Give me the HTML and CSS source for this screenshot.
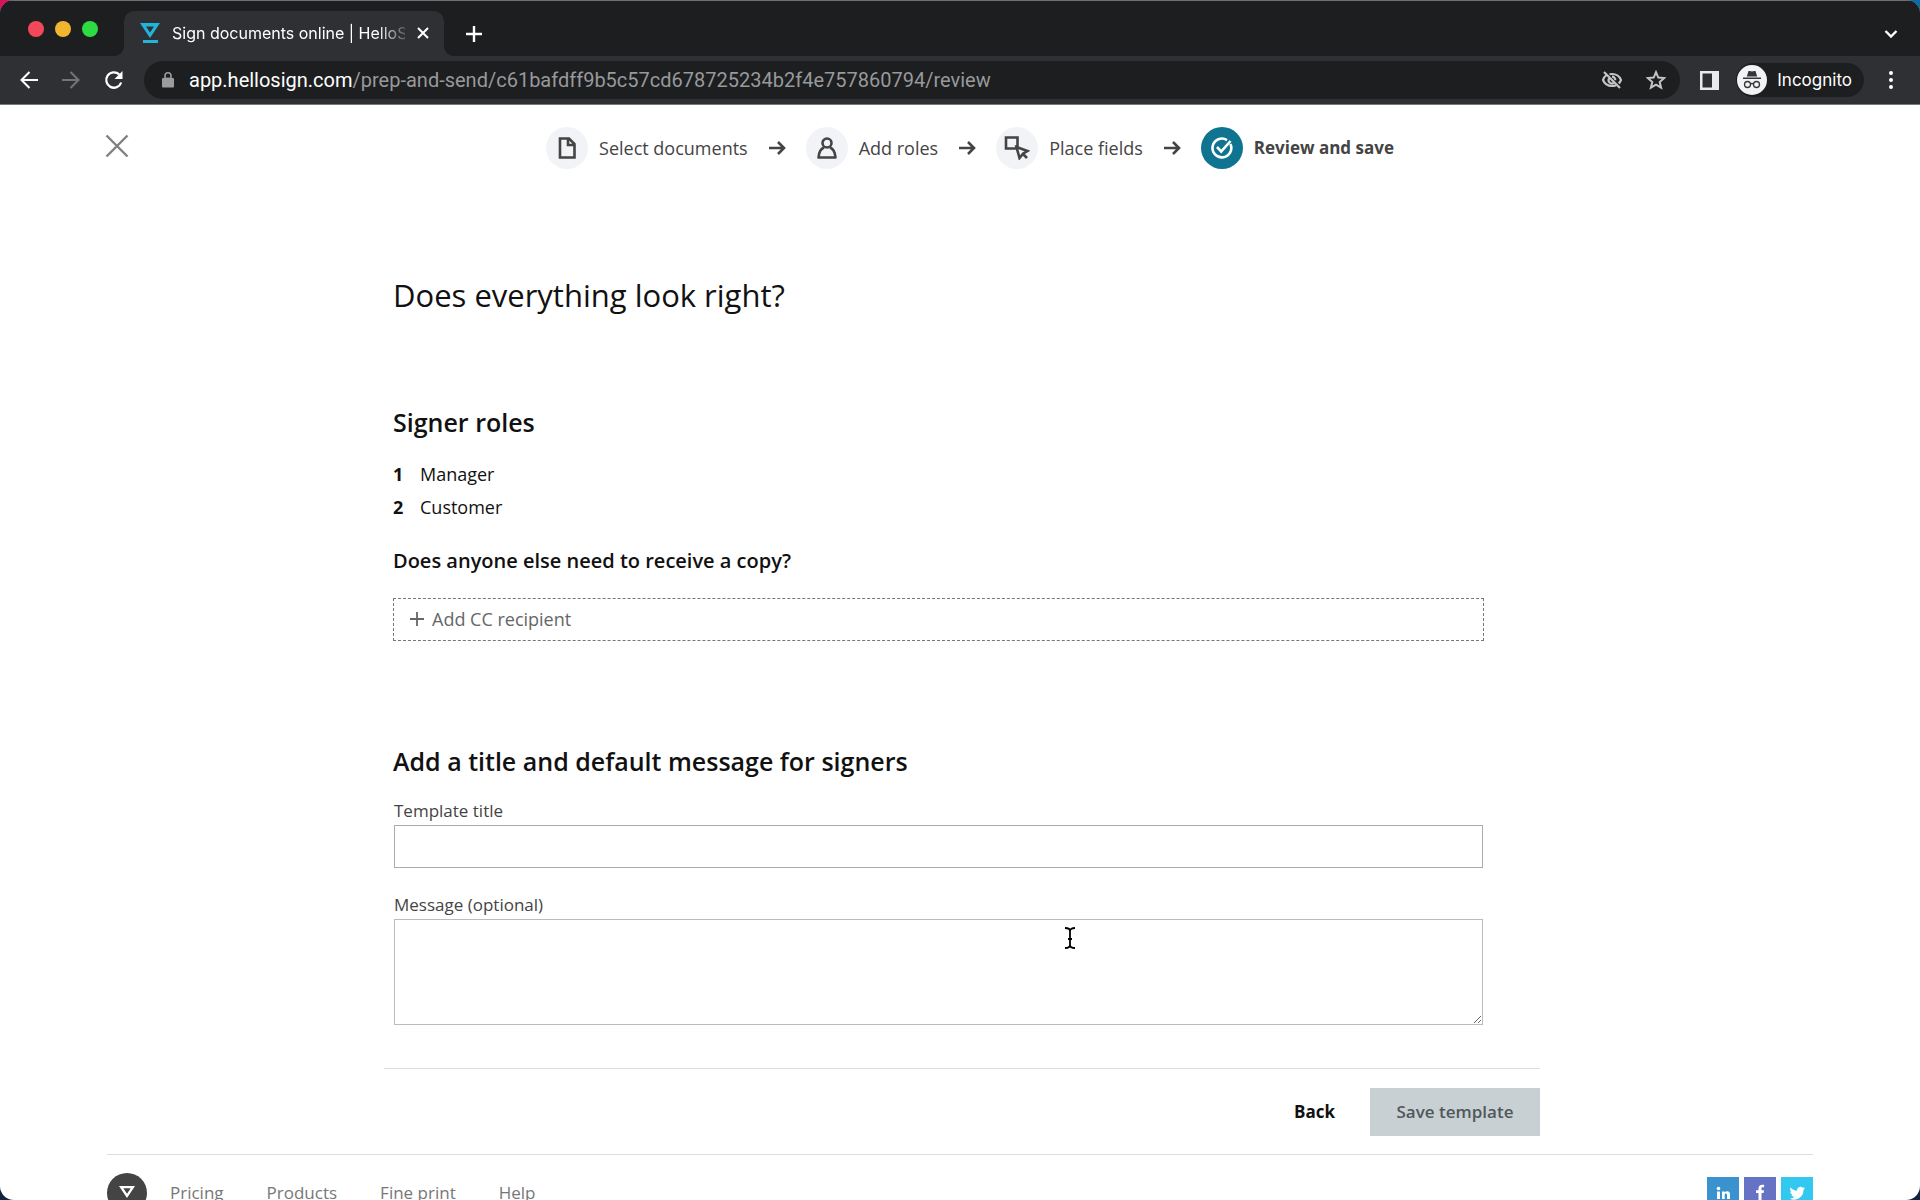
FILE: index.html
```html
<!DOCTYPE html>
<html lang="en">
<head>
<meta charset="utf-8">
<title>Sign documents online | HelloSign</title>
<link rel="stylesheet" href="styles.css">
</head>
<body>
<div class="window">
  <header class="chrome">
    <div class="tabstrip">
      <div class="lights"><span class="light red"></span><span class="light yellow"></span><span class="light green"></span></div>
      <div class="tab">
        <svg class="favicon" width="20" height="20" viewBox="0 0 20 20"><path fill="#22b5dc" fill-rule="evenodd" d="M0 0h20L10 15zM6 3.500l4 6 4-6zM3 17h15v3H3z"/></svg>
        <span class="tab-title">Sign documents online | HelloSign</span>
        <button class="plain" aria-label="Close tab"><svg width="12" height="12" viewBox="0 0 12 12" fill="none" stroke="#fff" stroke-width="2"><path d="M1 1l10 10M11 1L1 11"/></svg></button>
      </div>
      <button class="plain new-tab" aria-label="New tab"><svg width="16" height="16" viewBox="0 0 16 16" fill="none" stroke="#fff" stroke-width="2.400"><path d="M8 0v16M0 8h16"/></svg></button>
      <button class="plain tab-search" aria-label="Search tabs"><svg width="14" height="10" viewBox="0 0 14 10" fill="none" stroke="#fff" stroke-width="2.400"><path d="M1.500 2l5.500 5.500L12.500 2"/></svg></button>
    </div>
    <div class="toolbar">
      <div class="nav">
        <button class="plain" aria-label="Back"><svg width="18" height="18" viewBox="0 0 18 18" fill="none" stroke="#fff" stroke-width="2"><path d="M18 9H2M9.500 1L1.500 9l8 8"/></svg></button>
        <button class="plain" aria-label="Forward"><svg width="18" height="18" viewBox="0 0 18 18" fill="none" stroke="#737477" stroke-width="2"><path d="M0 9h16M8.500 1l8 8-8 8"/></svg></button>
        <button class="plain" aria-label="Reload"><svg width="20" height="20" viewBox="0 0 20 20"><path fill="none" stroke="#fff" stroke-width="2.300" d="M17.200 12.500A7.700 7.700 0 1 1 15.200 4.400"/><path fill="#fff" d="M18.500 1v8h-8z"/></svg></button>
      </div>
      <div class="omnibox">
        <svg width="12" height="16" viewBox="0 0 12 16"><rect y="6" width="12" height="9.500" rx="1" fill="#9b9c9e"/><path d="M3 6V3.800a3 3 0 0 1 6 0V6" fill="none" stroke="#9b9c9e" stroke-width="1.600"/><path fill="#9b9c9e" d="M3 5h6v2H3z" opacity=".4"/></svg>
        <span class="url"><span class="host">app.hellosign.com</span>/prep-and-send/c61bafdff9b5c57cd678725234b2f4e757860794/review</span>
        <svg width="20" height="20" viewBox="0 0 20 20" fill="none" stroke="#c4c5c7" stroke-width="2.200"><path d="M4.500 5C2.800 6.300 1.600 8 1 10c1.500 3.800 5 6 9 6 1.500 0 2.800-.3 4-.8M7.500 4.200C8.300 4 9.100 4 10 4c4 0 7.500 2.200 9 6-.5 1.300-1.300 2.500-2.300 3.400"/><path d="M7 8.500A3.300 3.300 0 0 0 11.500 13M10 6.700a3.300 3.300 0 0 1 3.300 3.500M2 2l16 16"/></svg>
        <svg width="20" height="20" viewBox="0 0 20 20" fill="none" stroke="#c4c5c7" stroke-width="2"><path d="M10 2.200l2.300 5.400 5.900.5-4.500 3.900 1.400 5.700-5.100-3-5.100 3 1.400-5.700L1.800 8.100l5.900-.5z"/></svg>
      </div>
      <button class="plain" aria-label="Side panel"><svg width="20" height="20" viewBox="0 0 20 20"><path fill="#e8eaed" fill-rule="evenodd" d="M0 1h19v19H0zM2.500 3.500v14H12v-14z"/></svg></button>
      <button class="incognito">
        <svg width="30" height="30" viewBox="0 0 30 30"><circle cx="15" cy="15" r="15" fill="#f1f3f4"/><path fill="#35363a" d="M11.500 6h1.500l2 .6L17 6h1.500l1.700 5.500H9.800zM6 12.500h18V14H6z"/><g fill="none" stroke="#35363a" stroke-width="1.300"><circle cx="10.500" cy="19.500" r="3"/><circle cx="19.500" cy="19.500" r="3"/><path d="M13.500 19q1.500-1 3 0"/></g></svg>
        Incognito
      </button>
      <button class="plain menu" aria-label="Menu"><svg width="4" height="18" viewBox="0 0 4 18" fill="#fff"><circle cx="2" cy="2" r="2"/><circle cx="2" cy="9" r="2"/><circle cx="2" cy="16" r="2"/></svg></button>
    </div>
  </header>

  <div class="page">
    <div class="topbar">
      <button class="plain close" aria-label="Close"><svg width="24" height="24" viewBox="0 0 24 24" fill="none" stroke="#808080" stroke-width="2.400"><path d="M1.500 1.500l21 21M22.500 1.500l-21 21"/></svg></button>
      <ol class="steps">
        <li class="step"><span class="step-icon"><svg width="18" height="22" viewBox="0 0 18 22" fill="none" stroke="#444" stroke-width="2.600"><path d="M2 1.500h9l5.500 5.500v13.500H2zM10 1.500V8h6.500"/></svg></span>Select documents</li>
        <li class="arrow"><svg width="18" height="14" viewBox="0 0 18 14" fill="none" stroke="#444" stroke-width="2.600"><path d="M1 7h14M10 1l6 6-6 6"/></svg></li>
        <li class="step"><span class="step-icon"><svg width="20" height="22" viewBox="0 0 20 22" fill="none" stroke="#444" stroke-width="2.600"><circle cx="10" cy="6" r="4.500"/><path d="M7 10.500c-3 1.200-5 3.500-5.500 10h17c-.5-6.500-2.500-8.800-5.500-10" stroke-linejoin="round"/></svg></span>Add roles</li>
        <li class="arrow"><svg width="18" height="14" viewBox="0 0 18 14" fill="none" stroke="#444" stroke-width="2.600"><path d="M1 7h14M10 1l6 6-6 6"/></svg></li>
        <li class="step"><span class="step-icon"><svg width="26" height="24" viewBox="0 0 26 24" fill="none" stroke="#444" stroke-width="2.600"><path d="M12 12.500H2v-11h11.500v9M12.500 11l11 4-4.500 2.700L15.500 22zM18 17l5 5"/></svg></span>Place fields</li>
        <li class="arrow"><svg width="18" height="14" viewBox="0 0 18 14" fill="none" stroke="#444" stroke-width="2.600"><path d="M1 7h14M10 1l6 6-6 6"/></svg></li>
        <li class="step current" aria-current="step"><span class="step-icon"><svg width="22" height="22" viewBox="0 0 22 22" fill="none" stroke="#fff" stroke-width="2.600"><path d="M19.400 7A9.400 9.400 0 1 1 16 3.100M6 10l4.200 4.500L19.500 4"/></svg></span>Review and save</li>
      </ol>
    </div>

    <main class="content">
      <form class="review">
        <h1>Does everything look right?</h1>
        <section class="roles">
          <h2>Signer roles</h2>
          <ol class="role-list">
            <li><b>1</b>Manager</li>
            <li><b>2</b>Customer</li>
          </ol>
          <h3>Does anyone else need to receive a copy?</h3>
          <button type="button" class="add-cc"><svg width="14" height="14" viewBox="0 0 14 14" fill="none" stroke="#666" stroke-width="1.800"><path d="M7 0v14M0 7h14"/></svg>Add CC recipient</button>
        </section>
        <section class="message">
          <h2>Add a title and default message for signers</h2>
          <div class="field">
            <label for="title">Template title</label>
            <input id="title" type="text">
          </div>
          <div class="field">
            <label for="msg">Message (optional)</label>
            <textarea id="msg"></textarea>
            <svg class="pointer" width="14" height="22" viewBox="0 0 14 22" fill="none" stroke="#000" stroke-width="1.800"><path d="M2 1c3 0 5 1 5 3 0-2 2-3 5-3M7 4v14M2 21c3 0 5-1 5-3 0 2 2 3 5 3M5 12h4"/></svg>
          </div>
        </section>
      </form>
      <div class="actions">
        <button type="button" class="back">Back</button>
        <button type="button" class="save" disabled>Save template</button>
      </div>
    </main>

    <footer class="footer">
      <svg width="40" height="40" viewBox="0 0 40 40"><circle cx="20" cy="20" r="20" fill="#444"/><path fill="#fff" fill-rule="evenodd" d="M12 13h16l-8 12zM16.300 15.300l3.700 5.500 3.700-5.500zM14 27h12v2.500H14z"/></svg>
      <nav class="links"><a href="#">Pricing</a><a href="#">Products</a><a href="#">Fine print</a><a href="#">Help</a></nav>
      <div class="social">
        <a class="linkedin" href="#" aria-label="LinkedIn"><svg width="32" height="32" viewBox="0 0 32 32" fill="#fff"><circle cx="11.500" cy="11.500" r="1.800"/><path d="M10 14.500h3V22h-3zM15 14.500h2.700v1c.6-.8 1.500-1.200 2.500-1.200 2 0 2.800 1.200 2.800 3.400V22h-3v-3.800c0-1-.3-1.600-1.100-1.600-.9 0-1.200.6-1.200 1.600V22H15z"/></svg></a>
        <a class="facebook" href="#" aria-label="Facebook"><svg width="32" height="32" viewBox="0 0 32 32" fill="#fff"><path d="M14.500 23v-7H12v-2.700h2.500v-1.800c0-2.500 1.400-3.800 3.600-3.800h2v2.600h-1.300c-.9 0-1.300.5-1.300 1.300v1.700H20l-.4 2.700h-2.100v7z"/></svg></a>
        <a class="twitter" href="#" aria-label="Twitter"><svg width="32" height="32" viewBox="0 0 32 32" fill="#fff"><path d="M24 11.200c-.6.300-1.100.4-1.700.5.600-.4 1-.9 1.300-1.600-.6.300-1.200.6-1.900.7a3.300 3.300 0 0 0-5.600 3c-2.700-.1-5-1.400-6.500-3.300-.8 1.400-.5 3.300 1 4.300-.5 0-1-.1-1.400-.4 0 1.600 1.100 2.900 2.600 3.300-.5.100-.9.100-1.400 0 .4 1.300 1.600 2.200 3 2.300A6.600 6.600 0 0 1 8.500 21.500 9.300 9.300 0 0 0 22.400 13c.6-.5 1.200-1.100 1.600-1.800z"/></svg></a>
      </div>
    </footer>
  </div>
</div>
</body>
</html>
```
FILE: styles.css
```css
* { box-sizing: border-box; }
body {
  margin: 0;
  font: 18px/24px "Open Sans", sans-serif;
  color: #111;
  background: linear-gradient(#0b2b4a00 50%, #14233c 90%), linear-gradient(90deg, #d8125c 30%, #0c6ba5 70%);
}
button { font: inherit; cursor: pointer; }
svg { display: block; flex: none; }
a { color: inherit; text-decoration: none; }
h1, h2, h3, ol { margin: 0; padding: 0; }
ol { list-style: none; }
.plain { padding: 0; border: 0; background: none; }

.window {
  display: flex;
  flex-direction: column;
  height: 100vh;
  overflow: hidden;
  border-radius: 14px;
  background: #fff;
}

/* Browser chrome */
.chrome {
  flex: none;
  background: #2f3033;
  border-top: 1px solid #6f7072;
  border-bottom: 1px solid #77787a;
  font-family: Inter, sans-serif;
}
.tabstrip {
  display: flex;
  align-items: center;
  height: 55px;
  padding: 10px 22px 0 28px;
  background: #1d1e20;
}
.lights { display: flex; gap: 11px; margin-bottom: 10px; }
.light { width: 16px; height: 16px; border-radius: 50%; }
.red { background: #f4485a; }
.yellow { background: #f2b52f; }
.green { background: #2edc41; }
.tab {
  position: relative;
  display: flex;
  align-items: center;
  gap: 12px;
  width: 320px;
  height: 45px;
  margin-left: 26px;
  padding: 0 15px 2px 16px;
  border-radius: 10px 10px 0 0;
  background: #2f3033;
}
.tab::before, .tab::after {
  content: "";
  position: absolute;
  bottom: 0;
  width: 10px;
  height: 10px;
}
.tab::before { right: 100%; background: radial-gradient(circle at 0 0, #1d1e20 10px, #2f3033 10px); }
.tab::after { left: 100%; background: radial-gradient(circle at 100% 0, #1d1e20 10px, #2f3033 10px); }
.tab-title {
  flex: 1;
  overflow: hidden;
  white-space: nowrap;
  font-size: 16px;
  color: #fff;
  -webkit-mask-image: linear-gradient(90deg, #000 88%, #0003);
  mask-image: linear-gradient(90deg, #000 88%, #0003);
}
.new-tab { margin-left: 22px; }
.tab-search { margin-left: auto; }
.toolbar {
  display: flex;
  align-items: center;
  height: 48px;
  padding: 0 27px 0 20px;
}
.nav { display: flex; align-items: center; gap: 24px; }
.omnibox {
  flex: 1;
  display: flex;
  align-items: center;
  gap: 24px;
  height: 38px;
  margin: 0 20px;
  padding: 0 14px 0 18px;
  border-radius: 19px;
  background: #1d1e20;
}
.url {
  flex: 1;
  margin-left: -9px;
  font: 20px/24px Roboto, sans-serif;
  color: #98999b;
}
.host { color: #fff; }
.incognito {
  display: flex;
  align-items: center;
  gap: 10px;
  height: 34px;
  margin-left: 16px;
  padding: 0 12px 0 1px;
  border: 0;
  border-radius: 17px;
  background: #1d1e20;
  color: #fff;
  font-size: 17px;
}
.menu { margin-left: 25px; }

/* Wizard steps */
.page { flex: 1; min-height: 0; overflow: hidden; }
.topbar {
  position: relative;
  display: flex;
  justify-content: center;
  padding: 22px 0 0 20px;
}
.close { position: absolute; left: 105px; top: 29px; }
.steps { display: flex; align-items: center; color: #444; }
.step { display: flex; align-items: center; gap: 11px; }
.step-icon {
  display: grid;
  place-items: center;
  width: 42px;
  height: 42px;
  border-radius: 50%;
  background: #f2f3f7;
}
.current { font-size: 17px; font-weight: 700; }
.current .step-icon { background: #0e7490; }
.arrow { padding: 0 20px; }

/* Review form */
.content { max-width: 1156px; margin-left: 20%; }
.review { padding: 106px 56px 43px 9px; }
h1 { font-size: 31px; line-height: 40px; font-weight: 400; }
h2 { font-size: 25px; line-height: 32px; font-weight: 600; }
h3 { margin-top: 23px; font-size: 20px; line-height: 28px; font-weight: 600; }
.roles { margin-top: 91px; }
.role-list { margin-top: 20px; line-height: 33px; }
.role-list li { display: flex; }
.role-list b { width: 27px; }
.add-cc {
  display: flex;
  align-items: center;
  gap: 8px;
  width: 100%;
  height: 43px;
  margin-top: 23px;
  padding: 0 16px 2px;
  border: 1px dashed #777;
  background: #fff;
  color: #666;
}
.message { margin-top: 104px; }
.field {
  position: relative;
  display: flex;
  flex-direction: column;
  gap: 2px;
  margin: 22px 1px 0;
  color: #444;
  font-size: 17px;
}
.field + .field { margin-top: 25px; }
input, textarea {
  height: 43px;
  padding: 8px;
  border: 1px solid #a9abae;
  border-radius: 0;
  background: #fff;
  font: inherit;
}
textarea { height: 106px; border-color: #bbb; resize: vertical; }
.pointer { position: absolute; left: 669px; top: 34px; }
.actions {
  display: flex;
  justify-content: flex-end;
  gap: 14px;
  padding-top: 19px;
  border-top: 1px solid #ddd;
  font-size: 17px;
  font-weight: 700;
}
.actions button { height: 48px; border: 0; }
.back { padding: 0 21px; background: none; color: #111; }
.save { width: 170px; padding: 0; background: #c8d0d3; color: #50585b; font-weight: 600; }

/* Site footer */
.footer {
  display: flex;
  align-items: center;
  gap: 23px;
  margin: 18px 107px 0;
  padding-top: 18px;
  border-top: 1px solid #ddd;
  font-size: 17px;
  color: #777;
}
.links { display: flex; gap: 43px; }
.social { display: flex; gap: 5px; margin-left: auto; }
.linkedin { background: #3a93cf; }
.facebook { background: #6672c4; }
.twitter { background: #33c8f0; }
```
